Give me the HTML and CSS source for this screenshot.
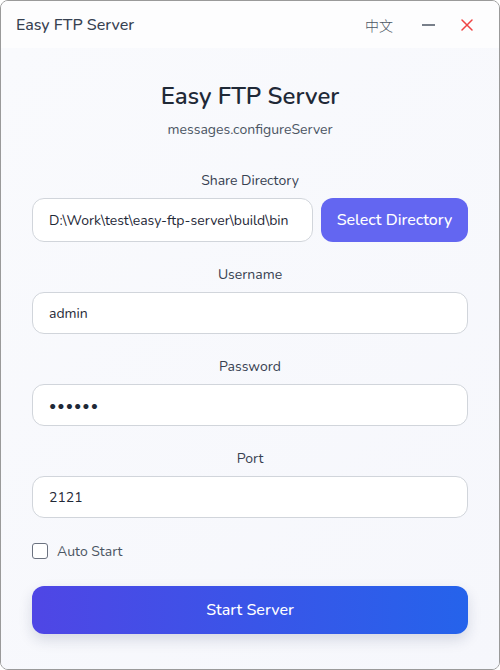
FILE: index.html
```html
<!DOCTYPE html>
<html>
<head>
<meta charset="utf-8">
<link rel="stylesheet" href="styles.css">
</head>
<body>
<div class="window">
  <header class="titlebar">
    <span class="app-title">Easy FTP Server</span>
    <div class="title-actions">
      <span class="lang">中文</span>
      <span class="win-btn min">
        <svg width="13" height="14" viewBox="0 0 13 14"><path d="M0 7H13" stroke="#4b5563" stroke-width="1.4"/></svg>
      </span>
      <span class="win-btn close">
        <svg width="12" height="14" viewBox="0 0 12 14"><path d="M1 2L11 12M11 2L1 12" stroke="#ef4444" stroke-width="1.5" stroke-linecap="round"/></svg>
      </span>
    </div>
  </header>
  <main class="content">
    <h1 class="heading">Easy FTP Server</h1>
    <p class="subtitle">messages.configureServer</p>

    <div class="field first">
      <label class="label">Share Directory</label>
      <div class="dir-row">
        <input class="input" type="text" value="D:\Work\test\easy-ftp-server\build\bin">
        <button class="btn-select">Select Directory</button>
      </div>
    </div>

    <div class="field">
      <label class="label">Username</label>
      <input class="input" type="text" value="admin">
    </div>

    <div class="field">
      <label class="label">Password</label>
      <input class="input pwd" type="password" value="123456">
    </div>

    <div class="field">
      <label class="label">Port</label>
      <input class="input" type="text" value="2121">
    </div>

    <label class="check-row">
      <span class="checkbox"></span>
      <span class="check-label">Auto Start</span>
    </label>

    <button class="btn-start">Start Server</button>
  </main>
</div>
</body>
</html>
```
FILE: styles.css
```css
* { box-sizing: border-box; }
html, body { margin: 0; padding: 0; }
body {
  width: 500px;
  height: 670px;
  background: #ffffff;
  font-family: "Nunito", "Lato", "Open Sans", sans-serif;
}
.window {
  width: 500px;
  height: 670px;
  border: 1px solid #9a9a9a;
  border-radius: 8px;
  overflow: hidden;
  display: flex;
  flex-direction: column;
  background: #f8f9fd;
}
.titlebar {
  height: 47px;
  flex: none;
  background: #fdfdfe;
  display: flex;
  align-items: center;
  justify-content: space-between;
  padding: 0 26px 0 15px;
}
.app-title {
  font-size: 16px;
  color: #374151;
  font-weight: 500;
}
.title-actions {
  display: flex;
  align-items: center;
}
.lang {
  font-family: "Noto Sans CJK SC", sans-serif;
  font-size: 14px;
  font-weight: 300;
  color: #4b5563;
  margin-right: 29px;
}
.win-btn {
  display: flex;
  height: 14px;
}
.close { margin-left: 26px; }
.content {
  flex: 1;
  padding: 32px 31px 0 31px;
  display: flex;
  flex-direction: column;
  background: linear-gradient(135deg, #f9fafd 0%, #f6f7fc 100%);
}
.heading {
  margin: 0;
  text-align: center;
  font-size: 24px;
  line-height: 32px;
  font-weight: 600;
  color: #1f2937;
}
.subtitle {
  margin: 8px 0 0;
  text-align: center;
  font-size: 14px;
  line-height: 20px;
  color: #4b5563;
}
.field {
  display: flex;
  flex-direction: column;
  margin-top: 23px;
}
.field.first { margin-top: 31px; }
.label {
  text-align: center;
  font-size: 14px;
  line-height: 20px;
  color: #374151;
  margin-bottom: 7px;
}
.dir-row {
  display: flex;
  gap: 8px;
}
.input {
  width: 100%;
  height: 42px;
  border: 1px solid #d1d5db;
  border-radius: 12px;
  background: #ffffff;
  padding: 0 16px;
  font-family: inherit;
  font-size: 14px;
  color: #1f2937;
  outline: none;
}
.dir-row .input {
  flex: 1;
  min-width: 0;
  height: 44px;
}
.pwd { letter-spacing: 1px; }
.btn-select {
  flex: none;
  width: 147px;
  height: 44px;
  border: none;
  border-radius: 12px;
  background: #6366f1;
  color: #ffffff;
  font-family: inherit;
  font-size: 16px;
  font-weight: 500;
}
.check-row {
  display: flex;
  align-items: center;
  margin-top: 24px;
  height: 18px;
}
.checkbox {
  width: 16px;
  height: 16px;
  border: 1.5px solid #6b7280;
  border-radius: 3px;
  background: #ffffff;
}
.check-label {
  margin-left: 9px;
  font-size: 14px;
  color: #4b5563;
}
.btn-start {
  margin-top: 26px;
  height: 48px;
  border: none;
  border-radius: 12px;
  background: linear-gradient(90deg, #4f46e5 0%, #2563eb 100%);
  color: #ffffff;
  font-family: inherit;
  font-size: 16px;
  font-weight: 500;
  box-shadow: 0 6px 14px rgba(30, 41, 80, 0.15);
}
```
